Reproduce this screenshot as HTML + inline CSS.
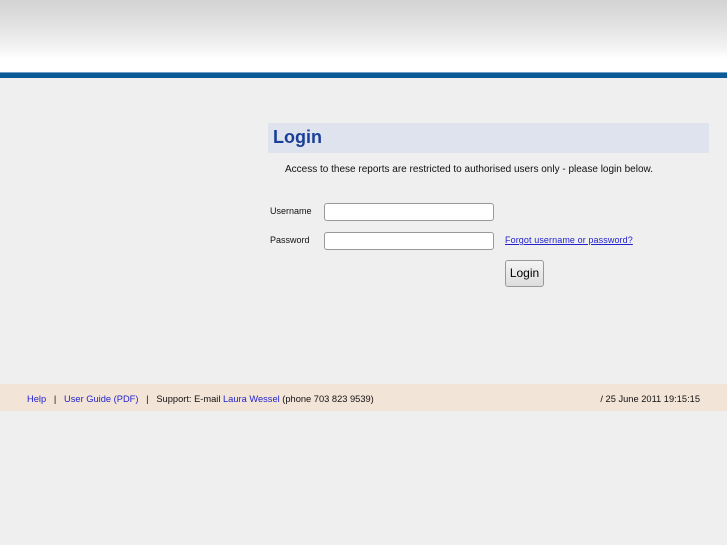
<!DOCTYPE html>
<html><head><style>
body{margin:0;width:727px;height:545px;background:#efefef;font-family:"Liberation Sans",sans-serif;position:relative;overflow:hidden}
.hdr{position:absolute;left:0;top:0;width:727px;height:72px;background:linear-gradient(#d3d3d3,#e2e2e2 25px,#f3f3f3 48px,#fff 58px,#fff)}
.bar{position:absolute;left:0;top:72px;width:727px;height:5px;background:#0a5a98;border-top:1px solid #6fa0c8}
.t{position:absolute;left:268px;top:123px;width:441px;height:30px;background:#dfe3ee}
.t span{position:absolute;left:5px;top:4px;font-size:18px;font-weight:bold;color:#1a3f9a}
.p{position:absolute;font-size:10px;color:#111}
.in{position:absolute;left:324px;width:168px;height:16px;background:#fff;border:1px solid #999;border-radius:3px}
a{color:#2222cc}
.btn{position:absolute;left:505px;top:260px;width:37px;height:25px;border:1px solid #999;border-radius:3px;background:linear-gradient(#f4f4f4,#ddd);font-size:12px;text-align:center;line-height:25px}
.ft{position:absolute;left:0;top:384px;width:727px;height:27px;background:#f3e4d8;font-size:9.3px;color:#111}
</style></head><body>
<div class="hdr"></div><div class="bar"></div>
<div class="t"><span>Login</span></div>
<div class="p" style="left:285px;top:164px">Access to these reports are restricted to authorised users only - please login below.</div>
<div class="p" style="left:270px;top:206px;font-size:9px">Username</div>
<div class="p" style="left:270px;top:235px;font-size:9px">Password</div>
<div class="in" style="top:203px"></div>
<div class="in" style="top:232px"></div>
<div class="p" style="left:505px;top:235px;font-size:9px;letter-spacing:0.1px"><a href="#">Forgot username or password?</a></div>
<div class="btn">Login</div>
<div class="ft">
<div style="position:absolute;left:27px;top:10px"><a href="#" style="text-decoration:none">Help</a> &nbsp; | &nbsp; <a href="#" style="text-decoration:none">User Guide (PDF)</a> &nbsp; | &nbsp; Support: E-mail <a href="#" style="text-decoration:none">Laura Wessel</a> (phone 703 823 9539)</div>
<div style="position:absolute;right:27px;top:10px">/ 25 June 2011 19:15:15</div>
</div>
</body></html>
